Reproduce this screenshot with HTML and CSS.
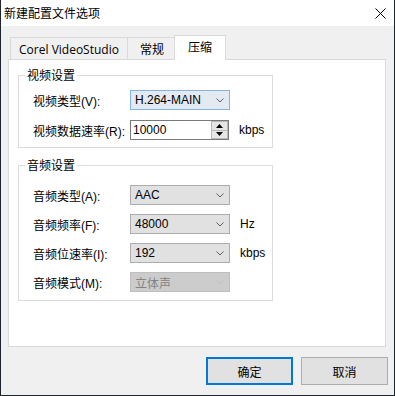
FILE: index.html
```html
<!DOCTYPE html>
<html lang="zh-CN">
<head>
<meta charset="utf-8">
<title>新建配置文件选项</title>
<link rel="stylesheet" href="styles.css">
</head>
<body>
<div class="window">
  <div class="titlebar">
    <span class="title">新建配置文件选项</span>
    <svg class="close" width="11" height="11" viewBox="0 0 11 11"><path d="M0.5 0.5 L10.5 10.5 M10.5 0.5 L0.5 10.5" stroke="#000" stroke-width="1" fill="none"/></svg>
  </div>
  <div class="body">
    <div class="tabs">
      <div class="tab tab-corel">Corel VideoStudio</div>
      <div class="tab tab-general">常规</div>
      <div class="tab tab-active">压缩</div>
    </div>
    <div class="panel">
      <fieldset class="group group-video">
        <legend>视频设置</legend>
        <div class="row">
          <span class="label">视频类型(V):</span>
          <div class="combo combo-hover"><span class="value">H.264-MAIN</span><svg class="chev" width="8" height="5" viewBox="0 0 8 5"><path d="M0.5 0.5 L4 4 L7.5 0.5" stroke="#606060" fill="none"/></svg></div>
        </div>
        <div class="row">
          <span class="label">视频数据速率(R):</span>
          <div class="spin">
            <span class="value">10000</span>
            <div class="spin-btns">
              <div class="spin-btn"><svg width="7" height="4" viewBox="0 0 7 4"><path d="M3.5 0 L7 4 L0 4 Z" fill="#000"/></svg></div>
              <div class="spin-btn"><svg width="7" height="4" viewBox="0 0 7 4"><path d="M0 0 L7 0 L3.5 4 Z" fill="#000"/></svg></div>
            </div>
          </div>
          <span class="unit">kbps</span>
        </div>
      </fieldset>
      <fieldset class="group group-audio">
        <legend>音频设置</legend>
        <div class="row">
          <span class="label">音频类型(A):</span>
          <div class="combo"><span class="value">AAC</span><svg class="chev" width="8" height="5" viewBox="0 0 8 5"><path d="M0.5 0.5 L4 4 L7.5 0.5" stroke="#606060" fill="none"/></svg></div>
        </div>
        <div class="row">
          <span class="label">音频频率(F):</span>
          <div class="combo"><span class="value">48000</span><svg class="chev" width="8" height="5" viewBox="0 0 8 5"><path d="M0.5 0.5 L4 4 L7.5 0.5" stroke="#606060" fill="none"/></svg></div>
          <span class="unit">Hz</span>
        </div>
        <div class="row">
          <span class="label">音频位速率(I):</span>
          <div class="combo"><span class="value">192</span><svg class="chev" width="8" height="5" viewBox="0 0 8 5"><path d="M0.5 0.5 L4 4 L7.5 0.5" stroke="#606060" fill="none"/></svg></div>
          <span class="unit">kbps</span>
        </div>
        <div class="row">
          <span class="label">音频模式(M):</span>
          <div class="combo combo-disabled"><span class="value">立体声</span><svg class="chev" width="8" height="5" viewBox="0 0 8 5"><path d="M0.5 0.5 L4 4 L7.5 0.5" stroke="#bfbfbf" fill="none"/></svg></div>
        </div>
      </fieldset>
    </div>
    <div class="buttons">
      <div class="btn btn-default">确定</div>
      <div class="btn">取消</div>
    </div>
  </div>
</div>
</body>
</html>
```
FILE: styles.css
```css
html, body {
  margin: 0;
  padding: 0;
}
body {
  width: 395px;
  height: 396px;
  overflow: hidden;
  background: #1e2530;
  font-family: "Liberation Sans", "Noto Sans CJK SC", sans-serif;
  font-size: 12px;
  color: #000;
}
.window {
  margin-left: 1px;
  width: 393px;
  height: 395px;
  background: #f0f0f0;
  display: flex;
  flex-direction: column;
}
.titlebar {
  height: 26px;
  background: #fff;
  display: flex;
  align-items: center;
  padding-left: 3px;
  padding-right: 8px;
  flex: none;
}
.title {
  font-family: "Noto Sans CJK SC", sans-serif;
  font-size: 12px;
  line-height: 16px;
}
.close {
  margin-left: auto;
  display: block;
}
.body {
  flex: 1;
  padding: 9px 8px 0 7px;
  display: flex;
  flex-direction: column;
}
.tabs {
  display: flex;
  align-items: flex-end;
  height: 24px;
  margin-left: 2px;
}
.tab {
  box-sizing: border-box;
  height: 22px;
  border: 1px solid #d9d9d9;
  border-bottom: none;
  background: #f0f0f0;
  display: flex;
  align-items: center;
  justify-content: center;
  font-family: "Open Sans", "Noto Sans CJK SC", sans-serif;
  font-size: 12px;
  padding-top: 1px;
}
.tab-corel {
  width: 118px;
}
.tab-general {
  width: 50px;
  margin-left: -1px;
}
.tab-active {
  width: 52px;
  height: 25px;
  margin-left: -3px;
  margin-bottom: -1px;
  background: #fff;
  position: relative;
  z-index: 1;
  padding-top: 0;
  padding-bottom: 2px;
}
.panel {
  box-sizing: border-box;
  height: 288px;
  border: 1px solid #d9d9d9;
  background: #fff;
  padding-left: 9px;
  padding-top: 7px;
}
.group {
  box-sizing: border-box;
  width: 255px;
  margin: 0;
  border: 1px solid #dcdcdc;
  padding: 7px 0 7px 6px;
  min-width: 0;
}
.group legend {
  padding: 0 2px;
  line-height: 16px;
  font-family: "Noto Sans CJK SC", sans-serif;
  font-size: 12px;
}
.group-video .row + .row {
  margin-top: 10px;
}
.group-audio {
  margin-top: 9px;
  padding-top: 12px;
  padding-bottom: 8px;
}
.group-audio .row + .row {
  margin-top: 9px;
}
.row {
  display: flex;
  align-items: center;
  height: 20px;
  padding-left: 8px;
}
.label {
  width: 97px;
  flex: none;
  white-space: nowrap;
}
.combo {
  box-sizing: border-box;
  width: 100px;
  height: 20px;
  border: 1px solid #adadad;
  background: #e1e1e1;
  display: flex;
  align-items: center;
  padding-left: 4px;
  padding-right: 5px;
}
.combo .value {
  flex: 1;
}
.chev {
  display: block;
}
.combo-hover {
  border-color: #86b3e0;
  background: #e4eaf1;
}
.combo-disabled {
  border-color: #bfbfbf;
  background: #cccccc;
  color: #838383;
}
.combo-disabled .value {
  font-family: "Noto Sans CJK SC", sans-serif;
}
.unit {
  margin-left: 10px;
}
.spin {
  box-sizing: border-box;
  width: 99px;
  height: 20px;
  border: 1px solid #7a7a7a;
  background: #fff;
  display: flex;
  align-items: center;
  padding-left: 2px;
}
.spin .value {
  flex: 1;
}
.spin-btns {
  align-self: stretch;
  width: 17px;
  display: flex;
  flex-direction: column;
}
.spin-btn {
  flex: 1;
  box-sizing: border-box;
  border: 1px solid #b8b8b8;
  background: #e6e6e6;
  display: flex;
  align-items: center;
  justify-content: center;
}
.spin-btn + .spin-btn {
  border-top: none;
}
.spin-btn svg {
  display: block;
}
.buttons {
  display: flex;
  justify-content: flex-end;
  gap: 8px;
  margin-top: 10px;
  margin-right: -2px;
}
.btn {
  box-sizing: border-box;
  width: 87px;
  height: 28px;
  border: 1px solid #adadad;
  background: #e1e1e1;
  display: flex;
  align-items: center;
  justify-content: center;
  font-family: "Noto Sans CJK SC", sans-serif;
  font-size: 12px;
}
.btn-default {
  border: 2px solid #0078d7;
}
```
